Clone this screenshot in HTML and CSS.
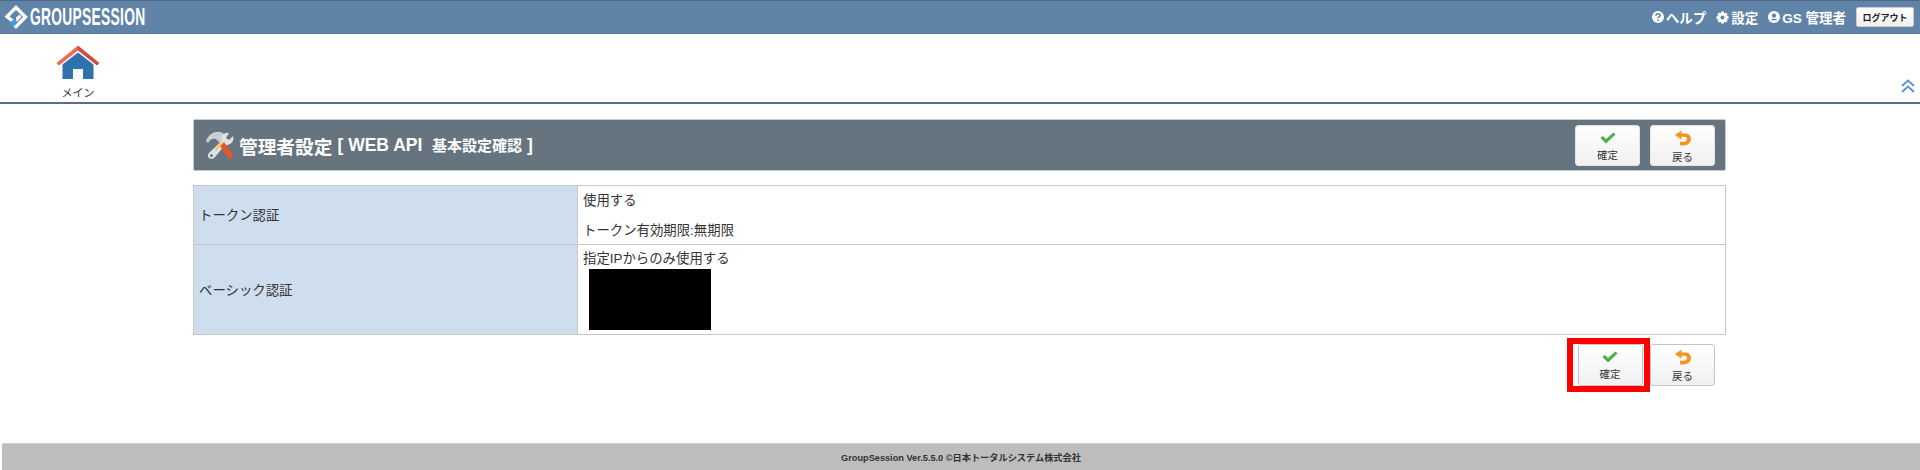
FILE: index.html
```html
<!DOCTYPE html>
<html lang="ja">
  <head>
    <meta charset="utf-8">
    <title>管理者設定</title>
    <link rel="stylesheet" href="styles.css">
  </head>
  <body>
    <header class="top-bar">
      <div class="logo">
        <svg class="logo-mark" viewBox="0 0 24 24" width="24" height="24">
          <path d="M10.500 17.500 L3 11.500 L12 2.500 L21.500 12 L12 21.500 L10 19.500" fill="none" stroke="#fff" stroke-width="3.400"/>
          <path d="M12 12.500 L15.500 9.500 L17.500 12 L12.500 17" fill="#fff"/>
          <path d="M6 17.500 L9.500 14.500 L13 18 L10 21.500 Z" fill="#2f9df0"/>
        </svg>
        <span class="logo-text">GROUPSESSION</span>
      </div>
      <nav class="top-nav">
        <span class="top-link">
          <svg class="nav-icon" viewBox="0 0 14 14" width="12" height="12"><circle cx="7" cy="7" r="7" fill="#fff"/><path d="M4.600 5.400 C4.600 2.600 9.400 2.600 9.400 5.300 C9.400 6.900 7 6.800 7 8.400" fill="none" stroke="#5f84a8" stroke-width="1.800"/><circle cx="7" cy="10.600" r="1.100" fill="#5f84a8"/></svg>ヘルプ
        </span>
        <span class="top-link">
          <svg class="nav-icon" viewBox="0 0 14 14" width="13" height="13"><path d="M5.600 0.500 H8.400 L8.900 2.400 L10.600 1.500 L12.500 3.400 L11.600 5.100 L13.500 5.600 V8.400 L11.600 8.900 L12.500 10.600 L10.600 12.500 L8.900 11.600 L8.400 13.500 H5.600 L5.100 11.600 L3.400 12.500 L1.500 10.600 L2.400 8.900 L0.500 8.400 V5.600 L2.400 5.100 L1.500 3.400 L3.400 1.500 L5.100 2.400 Z" fill="#fff"/><circle cx="7" cy="7" r="2.200" fill="#5f84a8"/></svg>設定
        </span>
        <span class="top-link">
          <svg class="nav-icon" viewBox="0 0 14 14" width="12" height="12"><circle cx="7" cy="7" r="7" fill="#fff"/><circle cx="7" cy="5.400" r="2.400" fill="#5f84a8"/><path d="M2.800 10.800 C4 8.300 10 8.300 11.200 10.800 Z" fill="#5f84a8"/></svg>GS 管理者
        </span>
        <button class="logout-btn">ログアウト</button>
      </nav>
    </header>

    <div class="menu-bar">
      <div class="menu-item">
        <svg viewBox="0 0 44 35" width="44" height="35">
          <path d="M6.500 19.500 L22 7.500 L37.500 19.500 V34 H27 V24 H17 V34 H6.500 Z" fill="#2f72ae"/>
          <path d="M0.500 18 L22 0.500 L22 5.500 L3 20.500 Z" fill="#ec6d56"/>
          <path d="M22 0.500 L43.500 18 L41 20.500 L22 5.500 Z" fill="#c9523d"/>
        </svg>
        <span class="menu-label">メイン</span>
      </div>
      <svg class="collapse-icon" viewBox="0 0 14 14" width="14" height="14">
        <path d="M1 7 L7 1.500 L13 7 M1 13 L7 7.500 L13 13" fill="none" stroke="#5b93cf" stroke-width="1.900"/>
      </svg>
    </div>

    <main class="content">
      <div class="title-bar">
        <svg class="title-icon" viewBox="0 0 30 30" width="30" height="30">
          <path d="M1 11 C4 3 12 0 18 3 L20 6 L17 9 L19 11 L16 14 L11 9 C8 8 5 9 3 13 Z" fill="#c9ced3"/>
          <path d="M28 6 L24 10 L21 8 L24 3 C19 2 15 6 16.500 11 L4 23 C2 25 3 28 5 28.500 C7 29.500 9 28.500 10 27 L20 15 C25 16 30 11 28 6 Z" fill="#dfe3e6"/>
          <path d="M15 16 L19 12 L27 23 C28.500 25 28 27 26.500 28 C25 29 23.500 28.500 22.500 27 Z" fill="#e8552d"/>
          <path d="M10.500 20 L17 12.500" stroke="#f6c945" stroke-width="2.200"/>
          <circle cx="6.500" cy="25.500" r="1.500" fill="#65747f"/>
        </svg>
        <span class="title-main">管理者設定</span>
        <span class="title-sub">[ WEB API&nbsp; <span class="title-small">基本設定確認</span> ]</span>
        <div class="title-buttons">
          <button class="act-btn">
            <svg viewBox="0 0 16 12" width="16" height="12"><path d="M0.500 6 L3 4 L6 7 L13.500 0.500 L15.500 2.500 L6 11.500 Z" fill="#4cae4c"/></svg>
            確定
          </button>
          <button class="act-btn">
            <svg viewBox="0 0 18 16" width="18" height="16"><path d="M7.500 0.500 V3.500 H11 C14.500 3.500 17 5.500 17 9 C17 12.500 14 15.500 9.500 15.500 H6 V11.800 H9.500 C12 11.800 13 10.500 13 9 C13 7.500 12 6.800 10.500 6.800 H7.500 V9.800 L1 5 Z" fill="#f7941e"/></svg>
            戻る
          </button>
        </div>
      </div>

      <table class="info-table">
        <tr class="row-token">
          <th>トークン認証</th>
          <td>
            <p>使用する</p>
            <p class="token-limit">トークン有効期限:無期限</p>
          </td>
        </tr>
        <tr class="row-basic">
          <th>ベーシック認証</th>
          <td>
            <p>指定IPからのみ使用する</p>
            <div class="redacted"></div>
          </td>
        </tr>
      </table>

      <div class="bottom-buttons">
        <div class="red-frame">
          <button class="act-btn act-btn-line">
            <svg viewBox="0 0 16 12" width="16" height="12"><path d="M0.500 6 L3 4 L6 7 L13.500 0.500 L15.500 2.500 L6 11.500 Z" fill="#4cae4c"/></svg>
            確定
          </button>
        </div>
        <button class="act-btn act-btn-line">
          <svg viewBox="0 0 18 16" width="18" height="16"><path d="M7.500 0.500 V3.500 H11 C14.500 3.500 17 5.500 17 9 C17 12.500 14 15.500 9.500 15.500 H6 V11.800 H9.500 C12 11.800 13 10.500 13 9 C13 7.500 12 6.800 10.500 6.800 H7.500 V9.800 L1 5 Z" fill="#f7941e"/></svg>
          戻る
        </button>
      </div>
    </main>

    <footer class="footer">GroupSession Ver.5.5.0 ©日本トータルシステム株式会社</footer>
  </body>
</html>
```

FILE: styles.css
```css
* { box-sizing: border-box; }
html, body { height: 100%; }
body {
  margin: 0;
  display: flex;
  flex-direction: column;
  background: #fff;
  color: #333;
  font: 13.4px "Liberation Sans", "Noto Sans CJK JP", sans-serif;
  overflow: hidden;
}
p { margin: 0; }

.top-bar {
  height: 34px;
  display: flex;
  align-items: center;
  justify-content: space-between;
  background: #5f84a8;
  border-top: 1px solid #4d6a88;
  border-bottom: 1px solid #54779a;
  color: #fff;
}
.logo {
  display: flex;
  align-items: center;
  gap: 2px;
  padding-left: 4px;
}
.logo-text {
  font: bold 23px "Liberation Sans", sans-serif;
  transform: scaleX(0.6);
  transform-origin: left center;
  letter-spacing: 0.5px;
}
.top-nav {
  display: flex;
  align-items: center;
  gap: 10px;
  padding-right: 6px;
  font-size: 13.5px;
  font-weight: bold;
}
.top-link {
  display: flex;
  align-items: center;
  gap: 2px;
}
.nav-icon { flex: none; }
.logout-btn {
  width: 58px;
  height: 20px;
  padding: 0;
  background: linear-gradient(#fff, #eee);
  border: 1px solid #ccc;
  border-radius: 2px;
  color: #222;
  font: bold 9px "Liberation Sans", "Noto Sans CJK JP", sans-serif;
}

.menu-bar {
  height: 70px;
  display: flex;
  justify-content: space-between;
  align-items: flex-end;
  border-bottom: 2px solid #5c6f80;
  padding: 0 5px 9px 56px;
}
.menu-item {
  width: 44px;
  display: flex;
  flex-direction: column;
  align-items: center;
  gap: 4px;
  margin-bottom: -7px;
}
.menu-label {
  font-size: 11px;
  white-space: nowrap;
}

.content {
  flex: 1;
  padding: 15px 194px 0 193px;
}
.title-bar {
  height: 52px;
  display: flex;
  align-items: center;
  padding: 0 10px 0 11px;
  background: #65747f;
  border: 1px solid #c6cbcf;
  border-radius: 2px;
  color: #fff;
  font-weight: bold;
}
.title-icon { margin-right: 4px; }
.title-main { font-size: 18.7px; margin-right: 5px; }
.title-sub { font-size: 17.5px; }
.title-small { font-size: 15px; }
.title-buttons {
  margin-left: auto;
  display: flex;
  gap: 10px;
}
.act-btn {
  width: 65px;
  height: 41px;
  padding: 3px 0 0;
  display: flex;
  flex: none;
  flex-direction: column;
  align-items: center;
  justify-content: center;
  gap: 3px;
  background: linear-gradient(#fff, #f0f0f0);
  border: 1px solid #e4e4e4;
  border-radius: 3px;
  color: #333;
  font: 10.5px "Liberation Sans", "Noto Sans CJK JP", sans-serif;
}
.act-btn-line {
  height: 42px;
  padding-top: 1px;
  border-color: #c4c4c4;
}

.info-table {
  width: 100%;
  height: 149px;
  margin-top: 14px;
  border-collapse: collapse;
}
.info-table th,
.info-table td {
  border: 1px solid #c8c8c8;
  font-weight: normal;
  text-align: left;
}
.info-table th {
  width: 384px;
  padding: 0 5px 2px;
  background: #cedeee;
}
.info-table td {
  padding: 5px 5px 0;
  vertical-align: top;
  line-height: 20px;
}
.row-token { height: 59px; }
.row-basic { height: 90px; }
.row-basic td { padding-top: 4px; }
.token-limit { margin-top: 10px; }
.redacted {
  width: 122px;
  height: 61px;
  margin: 0 0 0 6px;
  background: #000;
}

.bottom-buttons {
  display: flex;
  justify-content: flex-end;
  align-items: center;
  margin: 3px 11px 0 0;
}
.red-frame {
  width: 83px;
  height: 54px;
  padding: 0 1px 0 4px;
  border: 6px solid #f00;
  display: flex;
  align-items: center;
  justify-content: center;
}

.footer {
  height: 27px;
  margin-left: 2px;
  display: flex;
  align-items: center;
  justify-content: center;
  background: #bdbdbd;
  border-top: 1px solid #d0d0d0;
  color: #333;
  font-size: 9.2px;
  font-weight: bold;
}
```
